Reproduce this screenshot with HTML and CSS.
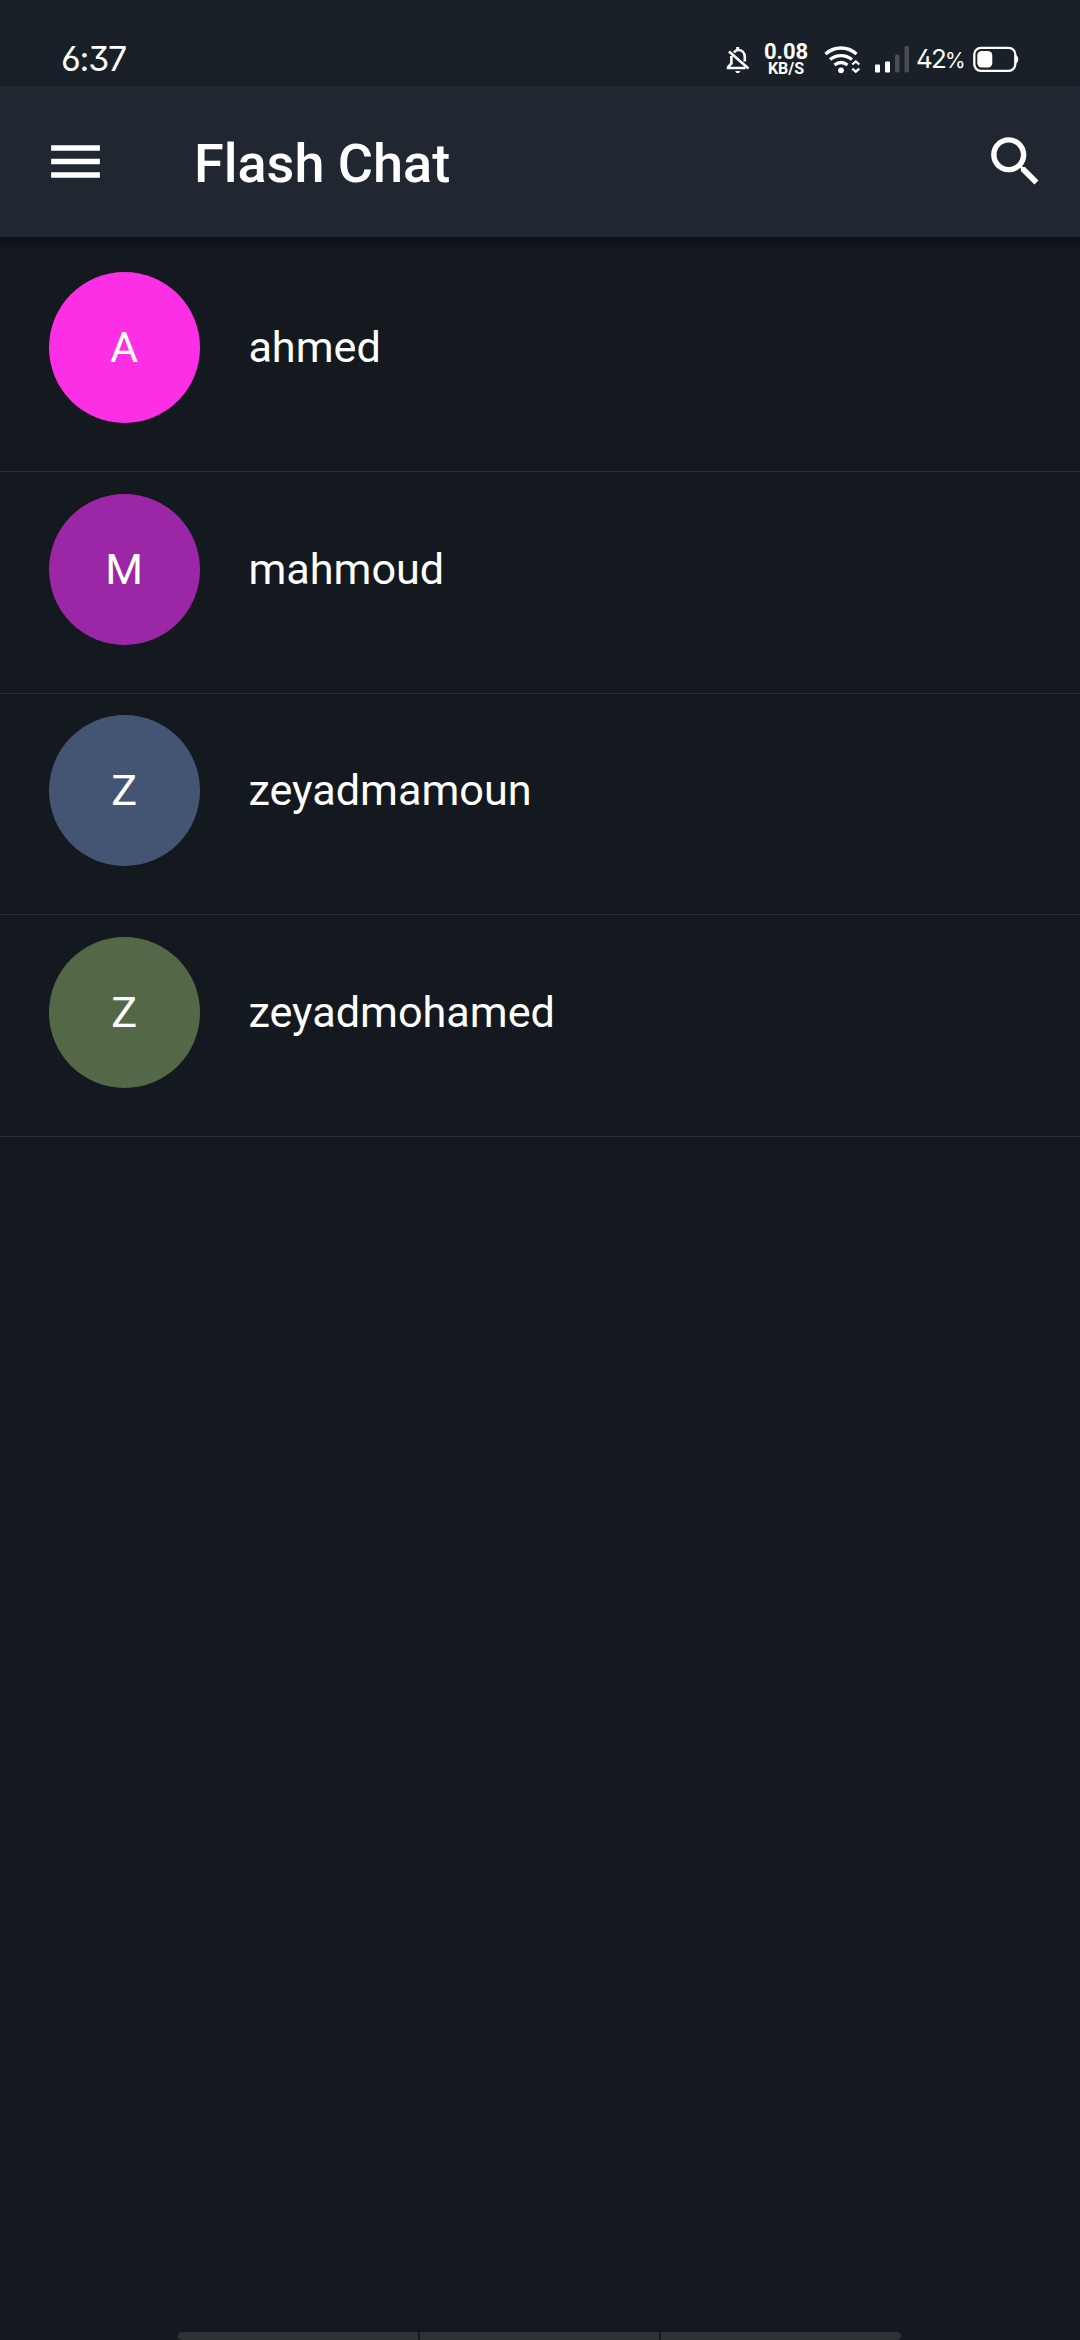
FILE: index.html
```html
<!DOCTYPE html>
<html lang="en">
<head>
<meta charset="utf-8">
<title>Flash Chat</title>
<link rel="stylesheet" href="styles.css">
</head>
<body>
<div class="screen">
  <div class="status-bar">
    <span class="clock">6:37</span>
    <svg class="bell" width="24" height="28" viewBox="0 0 24 28" fill="none" stroke="#fff" stroke-width="2.600">
      <path d="M8 6.500C9.500 4.600 10.500 4 12 4c4 0 6.800 3 6.800 7v4.500M5.400 10v7.500L2 21.200V22h17.500"/>
      <path d="M3 5.500L22.500 22.500"/>
      <path d="M11.700 1v3" stroke-width="3"/>
      <path d="M9 25h5.500l-1.500 2h-2.500z" fill="#fff" stroke="none"/>
    </svg>
    <div class="net-speed"><span class="speed">0.08</span><span class="unit">KB/S</span></div>
    <svg class="wifi" width="38" height="28" viewBox="0 0 38 28" fill="none" stroke="#fff" stroke-width="3.300">
      <path d="M1.500 8C10.500 0 23.500 0 32.500 8"/>
      <path d="M6 13.500c6.500-5.300 15.500-5.300 22 0"/>
      <path d="M10.500 19c4-3 9-3 13 0"/>
      <circle cx="17" cy="24.300" r="2.900" fill="#fff" stroke="none"/>
      <path d="M28.300 18.500l3.500-3 3.500 3M28.300 22.700l3.500 3 3.500-3" stroke-width="2.300"/>
    </svg>
    <svg class="signal" width="35" height="28" viewBox="0 0 35 28" fill="#fff">
      <rect x="0" y="18.500" width="5" height="8" rx="1"/>
      <rect x="10" y="15.500" width="5" height="11" rx="1"/>
      <g fill="#4a4c56"><rect x="20" y="8.500" width="4.500" height="18" rx="1.500"/><rect x="29.500" y="0" width="4.500" height="26.500" rx="1.500"/></g>
    </svg>
    <span class="percent">42<span class="percent-sign">%</span></span>
    <svg class="battery" width="46" height="27" viewBox="0 0 46 27">
      <rect x="1.300" y="1.800" width="41" height="23" rx="6.500" fill="none" stroke="#fff" stroke-width="2.300"/>
      <rect x="4.300" y="5" width="15" height="16.500" rx="4.500" fill="#fff"/>
      <path d="M43 9c3 1.500 3 7 0 8.500z" fill="#fff"/>
    </svg>
  </div>
  <header class="app-bar">
    <svg class="menu" width="65" height="65" viewBox="0 0 24 24" fill="#fff"><path d="M3 18h18v-2H3v2zm0-5h18v-2H3v2zm0-7v2h18V6H3z"/></svg>
    <h1 class="title">Flash Chat</h1>
    <svg class="search" width="65" height="65" viewBox="0 0 24 24" fill="#fff"><path d="M15.500 14h-.790l-.280-.270C15.410 12.590 16 11.110 16 9.500 16 5.910 13.090 3 9.500 3S3 5.910 3 9.500 5.910 16 9.500 16c1.610 0 3.090-.590 4.230-1.570l.270.280v.790l5 4.990L20.490 19l-4.990-5zm-6 0C7.010 14 5 11.990 5 9.500S7.010 5 9.500 5 14 7.010 14 9.500 11.990 14 9.500 14z"/></svg>
  </header>
  <main class="chats">
    <div class="chat"><span class="avatar pink">A</span><span class="name">ahmed</span></div>
    <div class="chat"><span class="avatar purple">M</span><span class="name">mahmoud</span></div>
    <div class="chat"><span class="avatar blue">Z</span><span class="name">zeyadmamoun</span></div>
    <div class="chat"><span class="avatar green">Z</span><span class="name">zeyadmohamed</span></div>
  </main>
  <div class="gesture-bar"><span></span><span></span><span></span></div>
</div>
</body>
</html>
```
FILE: styles.css
```css
* { box-sizing: border-box; }
body { margin: 0; background: #14191f; color: #fff; font-family: Roboto, sans-serif; }
.screen { display: flex; flex-direction: column; width: 1080px; height: 2340px; overflow: hidden; }
.status-bar { display: flex; align-items: flex-start; height: 86px; flex: none; background: #192027; }
.status-bar svg { flex: none; margin-top: 46px; }
.clock, .percent { font-family: Inter, sans-serif; font-feature-settings: "ss01", "cv09"; line-height: 40px; white-space: nowrap; }
.clock { width: 662px; margin-top: 39px; padding-left: 61px; font-size: 34px; letter-spacing: -1.200px; }
.status-bar .bell { margin-left: 64px; }
.net-speed { display: flex; flex-direction: column; align-items: center; width: 50px; margin: 42px 0 0 11px; font-weight: 700; }
.speed { font-size: 22px; line-height: 19px; }
.unit { font-size: 16px; line-height: 16px; }
.wifi { margin-left: 13px; }
.signal { margin-left: 13px; }
.percent { width: 50px; margin: 39px 0 0 6px; font-size: 26px; letter-spacing: -1.800px; }
.percent-sign { font-size: 21px; letter-spacing: 0; }
.battery { margin-left: 7px; }
.app-bar { position: relative; display: flex; align-items: center; height: 151px; flex: none; padding: 0 32px 0 43px; background: #212731; box-shadow: 0 5px 11px rgba(0, 0, 0, .42); }
.title { flex: 1; margin: 4px 0 0 86px; font-size: 54px; line-height: 64px; font-weight: 500; }
.chats { flex: 1; padding-top: 13.600px; }
.chat { display: flex; align-items: flex-start; height: 221.600px; padding: 21.500px 48.600px 0; border-bottom: 1px solid #2b2f35; font-size: 43.200px; }
.avatar { display: flex; align-items: center; justify-content: center; width: 151.200px; height: 151.200px; border-radius: 50%; }
.name { margin-left: 48.600px; line-height: 151.200px; }
.pink { background: #fc2ee6; }
.purple { background: #9b27a6; }
.blue { background: #445574; }
.green { background: #546848; }
.gesture-bar { display: flex; gap: 2px; width: 723px; height: 8px; margin-left: 178px; border-radius: 4px; overflow: hidden; }
.gesture-bar span { flex: 1; background: #2e3135; }
```
